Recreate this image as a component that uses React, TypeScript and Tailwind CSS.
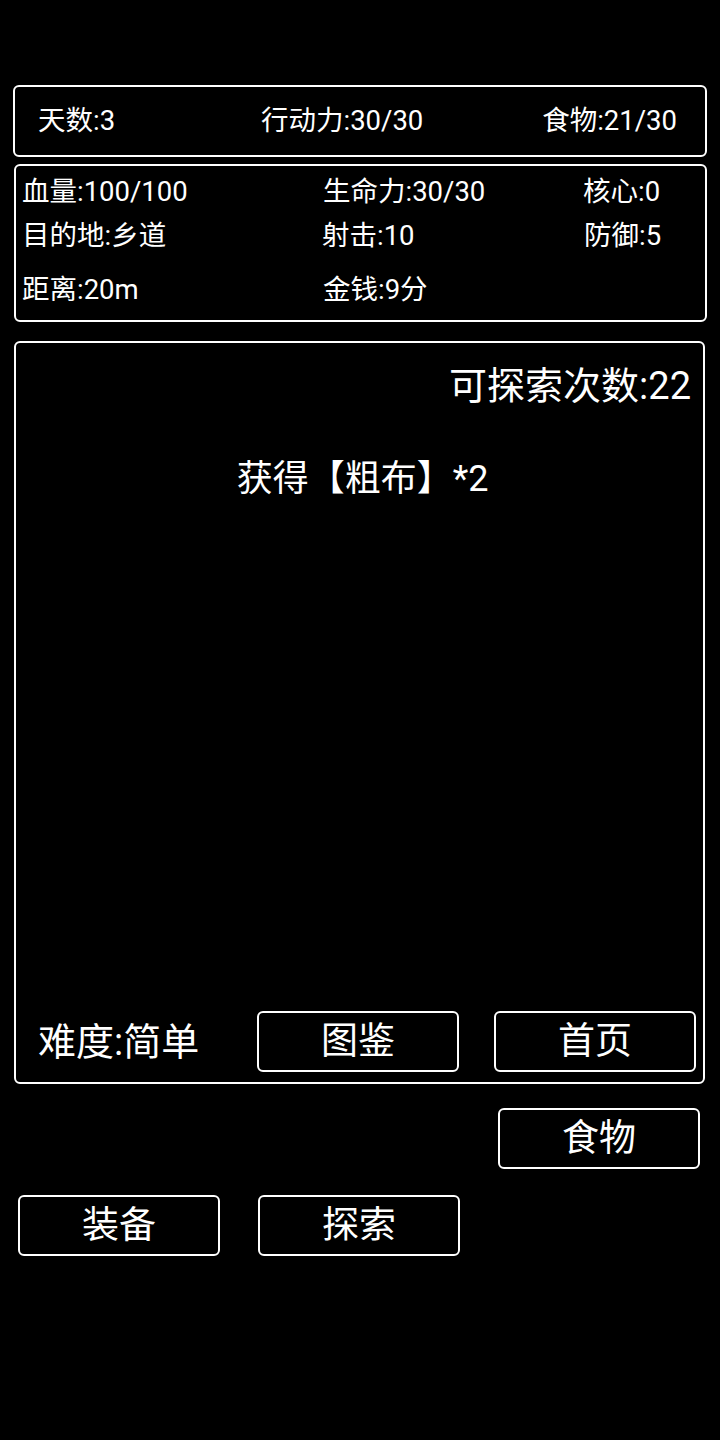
import React from "react";

const font = { fontFamily: 'Roboto, "Noto Sans CJK SC", sans-serif' };

function Btn(props: { label: string; className?: string }) {
  return (
    <div
      className={
        "flex h-[61px] w-[202px] items-center justify-center rounded-[6px] border-2 border-white text-[37px] leading-none text-white " +
        (props.className ?? "")
      }
    >
      {props.label}
    </div>
  );
}

export default function App() {
  return (
    <div className="min-h-[1440px] w-[720px] bg-black pt-[85px] text-white" style={font}>
      {/* top bar */}
      <div className="ml-[13px] flex h-[72px] w-[694px] items-center rounded-[6px] border-2 border-white pl-[23px] pr-[28px] text-[27.5px] leading-none">
        <span className="w-[223px]">天数:3</span>
        <span>行动力:30/30</span>
        <span className="ml-auto">食物:21/30</span>
      </div>

      {/* stats */}
      <div className="ml-[14px] mt-[7px] w-[693px] rounded-[6px] border-2 border-white pb-[14px] pl-[6px] pt-[10px] text-[27.5px] leading-[32px]">
        <div className="flex">
          <span className="w-[301px]">血量:100/100</span>
          <span className="w-[260px]">生命力:30/30</span>
          <span>核心:0</span>
        </div>
        <div className="mt-[12px] flex">
          <span className="w-[300px]">目的地:乡道</span>
          <span className="w-[262px]">射击:10</span>
          <span>防御:5</span>
        </div>
        <div className="mt-[22px] flex">
          <span className="w-[301px]">距离:20m</span>
          <span>金钱:9分</span>
        </div>
      </div>

      {/* explore panel */}
      <div className="ml-[14px] mt-[19px] flex h-[743px] w-[691px] flex-col rounded-[6px] border-2 border-white">
        <div className="mt-[22px] pr-[12px] text-right text-[38px] leading-[42px]">可探索次数:22</div>
        <div className="mt-[51px] pl-[6px] text-center text-[36px] leading-[42px]">获得【粗布】*2</div>
        <div className="mt-auto mb-[10px] flex items-center">
          <span className="w-[241px] pl-[22px] text-[38px] leading-none">难度:简单</span>
          <Btn label="图鉴" />
          <Btn label="首页" className="ml-[35px]" />
        </div>
      </div>

      <div className="mt-[24px] flex justify-end pr-[20px]">
        <Btn label="食物" />
      </div>
      <div className="mt-[26px] flex gap-[38px] pl-[18px]">
        <Btn label="装备" />
        <Btn label="探索" />
      </div>
    </div>
  );
}
